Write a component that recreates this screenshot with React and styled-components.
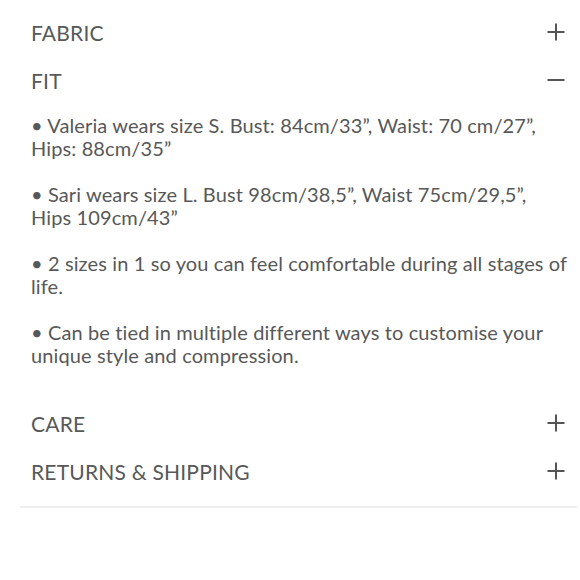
import styled, { createGlobalStyle } from "styled-components";

const GlobalStyle = createGlobalStyle`
  body {
    margin: 0;
    background: #fff;
    font-family: Lato, "Open Sans", sans-serif;
    color: #585858;
  }
`;

const sections = [
  { title: "FABRIC", open: false },
  {
    title: "FIT",
    open: true,
    body: [
      "• Valeria wears size S. Bust: 84cm/33”, Waist: 70 cm/27”, Hips: 88cm/35”",
      "• Sari wears size L. Bust 98cm/38,5”, Waist 75cm/29,5”, Hips 109cm/43”",
      "• 2 sizes in 1 so you can feel comfortable during all stages of life.",
      "• Can be tied in multiple different ways to customise your unique style and compression.",
    ],
  },
  { title: "CARE", open: false },
  { title: "RETURNS & SHIPPING", open: false },
];

const ToggleIcon = ({ open }) => (
  <svg width="18" height="18" viewBox="0 0 18 18">
    <line x1="0.5" y1="9" x2="17.5" y2="9" stroke="#555" strokeWidth="2" />
    {!open && (
      <line x1="9" y1="0.5" x2="9" y2="17.5" stroke="#555" strokeWidth="2" />
    )}
  </svg>
);

const App = () => {
  return (
    <>
      <GlobalStyle />
      <Accordion>
        {sections.map((s) => (
          <Section key={s.title}>
            <Header>
              <Title>{s.title}</Title>
              <ToggleIcon open={s.open} />
            </Header>
            {s.open && (
              <Body>
                {s.body.map((p) => (
                  <p key={p}>{p}</p>
                ))}
              </Body>
            )}
          </Section>
        ))}
      </Accordion>
    </>
  );
};

const Accordion = styled.div`
  padding: 8px 3px 0 20px;
`;

const Section = styled.div`
  &:last-child {
    border-bottom: 2px solid #eee;
    padding-bottom: 11px;
  }
`;

const Header = styled.div`
  height: 48px;
  display: flex;
  align-items: center;
  justify-content: space-between;
  padding: 0 12px 0 11px;
  cursor: pointer;
`;

const Title = styled.span`
  font-size: 21px;
  letter-spacing: 0.2px;
`;

const Body = styled.div`
  padding: 10px 10px 33px 11px;
  font-size: 20px;
  line-height: 22.5px;
  letter-spacing: 0.12px;

  p {
    margin: 0 0 24px;
  }

  p:last-child {
    margin-bottom: 0;
  }
`;

export default App;
